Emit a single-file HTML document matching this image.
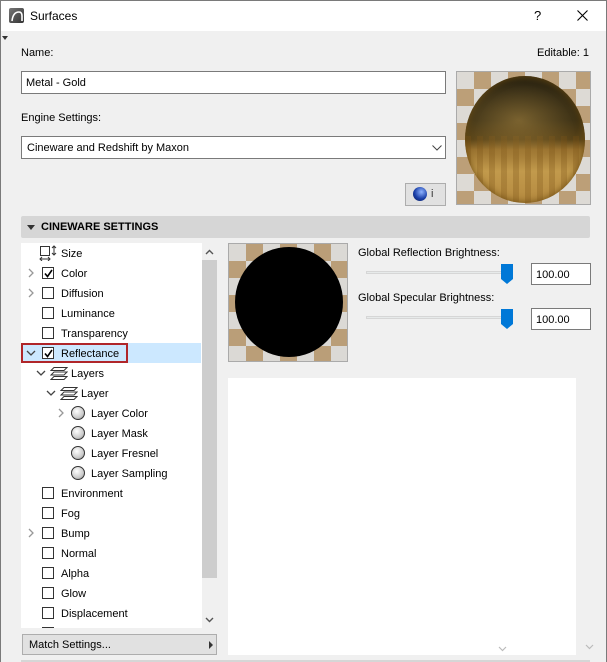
<!DOCTYPE html>
<html><head><meta charset="utf-8"><style>
*{box-sizing:border-box;margin:0;padding:0}
body{width:607px;height:662px;overflow:hidden;background:#f0f0f0;font-family:"Liberation Sans",Tahoma,sans-serif;font-size:11px;color:#000;position:relative}
.abs{position:absolute}
.frame{left:0;top:0;width:607px;height:662px;border:1px solid #7a7a7a;border-bottom:none}
.title{left:1px;top:1px;width:605px;height:30px;background:#fff}
.inp{background:#fff;border:1px solid #7a7a7a}
.chk{position:absolute;width:12px;height:12px;border:1px solid #333;background:#fff}
.row{position:absolute;left:0;height:20px;width:180px}
.row span.t{position:absolute;top:5px}
.chev{position:absolute;top:5px;width:10px;height:10px}
.checker{background-color:#dcd9d4;background-image:linear-gradient(45deg,#ad8550 25%,transparent 25%,transparent 75%,#ad8550 75%),linear-gradient(45deg,#ad8550 25%,transparent 25%,transparent 75%,#ad8550 75%);background-size:34px 34px;background-position:0 0,17px 17px}
</style></head><body>
<div class="abs title"></div>
<div class="abs frame"></div>
<div class="abs" style="left:9px;top:8px;width:15px;height:15px;background:linear-gradient(135deg,#777,#333);border-radius:2px"></div>
<svg class="abs" style="left:9px;top:8px" width="15" height="15"><path d="M3 13 Q4 4 10 4 Q13 4 13 8 L13 13" fill="none" stroke="#fff" stroke-width="1.6"/></svg>
<div class="abs" style="left:30px;top:9px;font-size:12px">Surfaces</div>
<div class="abs" style="left:534px;top:8px;font-size:13px">?</div>
<svg class="abs" style="left:577px;top:10px" width="11" height="11"><path d="M0.5 0.5L10.5 10.5M10.5 0.5L0.5 10.5" stroke="#000" stroke-width="1.1"/></svg>
<div class="abs" style="left:2px;top:36px;width:0;height:0;border-left:3px solid transparent;border-right:3px solid transparent;border-top:4px solid #333"></div>

<div class="abs" style="left:21px;top:47px">Name:</div>
<div class="abs" style="left:537px;top:47px">Editable: 1</div>
<div class="abs inp" style="left:21px;top:71px;width:425px;height:23px"><span class="abs" style="left:4px;top:5px">Metal - Gold</span></div>
<div class="abs" style="left:21px;top:112px">Engine Settings:</div>
<div class="abs inp" style="left:21px;top:136px;width:425px;height:23px"><span class="abs" style="left:5px;top:5px">Cineware and Redshift by Maxon</span>
<svg class="abs" style="left:410px;top:8px" width="10" height="6"><path d="M0.5 0.5L5 5L9.5 0.5" fill="none" stroke="#444"/></svg></div>
<div class="abs" style="left:405px;top:183px;width:41px;height:23px;background:#e1e1e1;border:1px solid #adadad"></div>
<div class="abs" style="left:413px;top:187px;width:14px;height:14px;border-radius:50%;background:radial-gradient(circle at 60% 35%,#8fb3ff,#1a3fa8 55%,#0a1a55)"></div>
<div class="abs" style="left:431px;top:188px;font-size:11px;color:#333">i</div>
<!-- gold preview -->
<div class="abs checker" style="left:456px;top:71px;width:135px;height:134px;border:1px solid #aaa;overflow:hidden">
<div class="abs" style="left:0;top:0;width:135px;height:134px;background:rgba(225,222,216,.3)"></div>
<div class="abs" style="left:8px;top:4px;width:120px;height:127px;border-radius:50%;background:linear-gradient(180deg,#2b2412 0%,#3a2f14 35%,#5a4418 50%,#9a7330 58%,#c29a4c 75%,#b58a40 100%);box-shadow:inset 0 0 8px #6a4a10"></div>
<div class="abs" style="left:8px;top:64px;width:120px;height:67px;border-radius:0 0 60px 60px/0 0 64px 64px;background:repeating-linear-gradient(90deg,rgba(120,80,20,.35) 0 6px,transparent 6px 12px);opacity:.8"></div>
<div class="abs" style="left:8px;top:4px;width:120px;height:127px;border-radius:50%;background:radial-gradient(ellipse 50% 30% at 45% 35%,rgba(200,160,80,.45),transparent)"></div>
</div>

<div class="abs" style="left:21px;top:216px;width:569px;height:22px;background:#d6d6d6;border-radius:2px"></div>
<div class="abs" style="left:27px;top:225px;width:0;height:0;border-left:4px solid transparent;border-right:4px solid transparent;border-top:5px solid #333"></div>
<div class="abs" style="left:41px;top:221px;font-weight:bold">CINEWARE SETTINGS</div>

<div class="abs" style="left:21px;top:243px;width:181px;height:385px;background:#fff;overflow:hidden">
<div class="row" style="top:100px;background:#cce8ff"></div>
<div class="abs" style="left:0;top:100px;width:107px;height:20px;border:2px solid #b0262a"></div>
<div class="row" style="top:0"><svg class="abs" style="left:18px;top:2px" width="18" height="16"><rect x="1.5" y="1.5" width="9" height="9" fill="none" stroke="#333"/><path d="M15 1v9M13 3l2-2 2 2M13 8l2 2 2-2M1 14h10M3 12l-2 2 2 2M9 12l2 2-2 2" fill="none" stroke="#333"/></svg><span class="t" style="left:40px">Size</span></div>
<div class="row" style="top:20px"><svg class="chev" style="left:6px"><path d="M2 1l4 4-4 4" fill="none" stroke="#999" stroke-width="1.3"/></svg><div class="chk" style="left:21px;top:4px"></div><svg class="abs" style="left:22px;top:5px" width="11" height="11"><path d="M2 5.5l2.5 3L9 2" fill="none" stroke="#000" stroke-width="1.6"/></svg><span class="t" style="left:40px">Color</span></div>
<div class="row" style="top:40px"><svg class="chev" style="left:6px"><path d="M2 1l4 4-4 4" fill="none" stroke="#999" stroke-width="1.3"/></svg><div class="chk" style="left:21px;top:4px"></div><span class="t" style="left:40px">Diffusion</span></div>
<div class="row" style="top:60px"><div class="chk" style="left:21px;top:4px"></div><span class="t" style="left:40px">Luminance</span></div>
<div class="row" style="top:80px"><div class="chk" style="left:21px;top:4px"></div><span class="t" style="left:40px">Transparency</span></div>
<div class="row" style="top:100px"><svg class="chev" style="left:5px"><path d="M1 3l4 4 4-4" fill="none" stroke="#444" stroke-width="1.3"/></svg><div class="chk" style="left:21px;top:4px"></div><svg class="abs" style="left:22px;top:5px" width="11" height="11"><path d="M2 5.5l2.5 3L9 2" fill="none" stroke="#000" stroke-width="1.6"/></svg><span class="t" style="left:40px">Reflectance</span></div>
<div class="row" style="top:120px"><svg class="chev" style="left:15px"><path d="M1 3l4 4 4-4" fill="none" stroke="#444" stroke-width="1.3"/></svg><svg class="abs" style="left:29px;top:3px" width="18" height="15"><path d="M4 1.5h13l-3 3H1zM4 6h13l-3 3H1zM4 10.5h13l-3 3H1z" fill="#fff" stroke="#333"/></svg><span class="t" style="left:50px">Layers</span></div>
<div class="row" style="top:140px"><svg class="chev" style="left:25px"><path d="M1 3l4 4 4-4" fill="none" stroke="#444" stroke-width="1.3"/></svg><svg class="abs" style="left:39px;top:3px" width="18" height="15"><path d="M4 1.5h13l-3 3H1zM4 6h13l-3 3H1zM4 10.5h13l-3 3H1z" fill="#fff" stroke="#333"/></svg><span class="t" style="left:60px">Layer</span></div>
<div class="row" style="top:160px"><svg class="chev" style="left:36px"><path d="M2 1l4 4-4 4" fill="none" stroke="#999" stroke-width="1.3"/></svg><div class="abs" style="left:50px;top:3px;width:14px;height:14px;border-radius:50%;border:1px solid #333;background:radial-gradient(circle at 40% 35%,#fff,#ccc 60%,#888)"></div><span class="t" style="left:70px">Layer Color</span></div>
<div class="row" style="top:180px"><div class="abs" style="left:50px;top:3px;width:14px;height:14px;border-radius:50%;border:1px solid #333;background:radial-gradient(circle at 40% 35%,#fff,#ccc 60%,#888)"></div><span class="t" style="left:70px">Layer Mask</span></div>
<div class="row" style="top:200px"><div class="abs" style="left:50px;top:3px;width:14px;height:14px;border-radius:50%;border:1px solid #333;background:radial-gradient(circle at 40% 35%,#fff,#ccc 60%,#888)"></div><span class="t" style="left:70px">Layer Fresnel</span></div>
<div class="row" style="top:220px"><div class="abs" style="left:50px;top:3px;width:14px;height:14px;border-radius:50%;border:1px solid #333;background:radial-gradient(circle at 40% 35%,#fff,#ccc 60%,#888)"></div><span class="t" style="left:70px">Layer Sampling</span></div>
<div class="row" style="top:240px"><div class="chk" style="left:21px;top:4px"></div><span class="t" style="left:40px">Environment</span></div>
<div class="row" style="top:260px"><div class="chk" style="left:21px;top:4px"></div><span class="t" style="left:40px">Fog</span></div>
<div class="row" style="top:280px"><svg class="chev" style="left:6px"><path d="M2 1l4 4-4 4" fill="none" stroke="#999" stroke-width="1.3"/></svg><div class="chk" style="left:21px;top:4px"></div><span class="t" style="left:40px">Bump</span></div>
<div class="row" style="top:300px"><div class="chk" style="left:21px;top:4px"></div><span class="t" style="left:40px">Normal</span></div>
<div class="row" style="top:320px"><div class="chk" style="left:21px;top:4px"></div><span class="t" style="left:40px">Alpha</span></div>
<div class="row" style="top:340px"><div class="chk" style="left:21px;top:4px"></div><span class="t" style="left:40px">Glow</span></div>
<div class="row" style="top:360px"><div class="chk" style="left:21px;top:4px"></div><span class="t" style="left:40px">Displacement</span></div>
<div class="row" style="top:380px"><div class="chk" style="left:21px;top:4px"></div></div>
</div>
<div class="abs" style="left:202px;top:243px;width:15px;height:385px;background:#f0f0f0"></div>
<div class="abs" style="left:202px;top:260px;width:15px;height:318px;background:#cdcdcd"></div>
<svg class="abs" style="left:205px;top:249px" width="9" height="6"><path d="M1 5l3.5-3.5L8 5" fill="none" stroke="#555" stroke-width="1.4"/></svg>
<svg class="abs" style="left:205px;top:617px" width="9" height="6"><path d="M1 1l3.5 3.5L8 1" fill="none" stroke="#555" stroke-width="1.4"/></svg>
<div class="abs" style="left:22px;top:634px;width:195px;height:21px;background:#e1e1e1;border:1px solid #adadad"><span class="abs" style="left:6px;top:4px">Match Settings...</span>
<div class="abs" style="left:186px;top:6px;width:0;height:0;border-top:4px solid transparent;border-bottom:4px solid transparent;border-left:4px solid #333"></div></div>

<div class="abs checker" style="left:228px;top:243px;width:120px;height:119px;border:1px solid #aaa;overflow:hidden">
<div class="abs" style="left:0;top:0;width:120px;height:119px;background:rgba(220,218,214,.3)"></div>
<div class="abs" style="left:6px;top:3px;width:108px;height:110px;border-radius:50%;background:#000"></div>
</div>
<div class="abs" style="left:358px;top:247px">Global Reflection Brightness:</div>
<div class="abs" style="left:366px;top:271px;width:142px;height:3px;background:#e7eaea;border:1px solid #d6d6d6"></div>
<svg class="abs" style="left:501px;top:264px" width="12" height="20"><path d="M0 0h12v15l-6 5-6-5z" fill="#0078d7"/></svg>
<div class="abs inp" style="left:531px;top:263px;width:60px;height:22px"><span class="abs" style="left:4px;top:5px">100.00</span></div>
<div class="abs" style="left:358px;top:292px">Global Specular Brightness:</div>
<div class="abs" style="left:366px;top:316px;width:142px;height:3px;background:#e7eaea;border:1px solid #d6d6d6"></div>
<svg class="abs" style="left:501px;top:309px" width="12" height="20"><path d="M0 0h12v15l-6 5-6-5z" fill="#0078d7"/></svg>
<div class="abs inp" style="left:531px;top:308px;width:60px;height:22px"><span class="abs" style="left:4px;top:5px">100.00</span></div>
<div class="abs" style="left:228px;top:378px;width:348px;height:277px;background:#fff"></div>
<svg class="abs" style="left:498px;top:646px" width="9" height="6"><path d="M1 1l3.5 3.5L8 1" fill="none" stroke="#bbb" stroke-width="1.2"/></svg>
<svg class="abs" style="left:585px;top:644px" width="9" height="6"><path d="M1 1l3.5 3.5L8 1" fill="none" stroke="#bbb" stroke-width="1.2"/></svg>
<div class="abs" style="left:21px;top:660px;width:569px;height:2px;background:#d6d6d6"></div>
</body></html>
